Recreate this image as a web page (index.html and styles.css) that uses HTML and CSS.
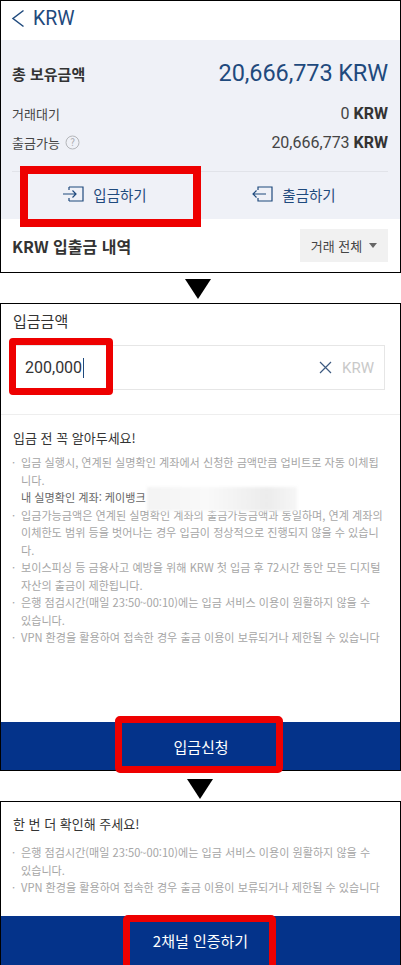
FILE: index.html
```html
<!DOCTYPE html>
<html lang="ko">
<head>
<meta charset="utf-8">
<title>KRW 입금</title>
<link rel="stylesheet" href="styles.css">
</head>
<body>
<div class="page">
  <section class="screen screen-one">
    <header class="nav">
      <svg class="back" width="14" height="20" viewBox="0 0 14 20"><path d="M12.5 1.500 2 9.500l10.500 8" fill="none" stroke="#1f4a7d" stroke-width="1.500"/></svg>
      <span class="nav-title">KRW</span>
    </header>
    <div class="summary">
      <div class="total-row">
        <strong class="total-label">총 보유금액</strong>
        <span class="total-value">20,666,773 KRW</span>
      </div>
      <div class="line-row line-first">
        <span>거래대기</span>
        <span>0 <b>KRW</b></span>
      </div>
      <div class="line-row line-second">
        <span class="with-help">출금가능
          <svg width="15" height="15" viewBox="0 0 15 15"><circle cx="7.500" cy="7.500" r="6.500" fill="none" stroke="#b4b6ba"/><text x="7.500" y="11" class="help-mark">?</text></svg>
        </span>
        <span>20,666,773 <b>KRW</b></span>
      </div>
      <div class="actions">
        <div class="action">
          <svg width="21" height="16" viewBox="0 0 21 16"><path d="M6 1h14v14H6M6 1v3M6 12v3M0 8h13M9.500 4.500 13 8l-3.500 3.500" fill="none" stroke="#1f4a7d" stroke-width="1.200"/></svg>
          <span>입금하기</span>
        </div>
        <div class="action">
          <svg width="21" height="16" viewBox="0 0 21 16"><path d="M6 4V1h14v14H6v-3M1 8h13M4.500 4.500 1 8l3.500 3.500" fill="none" stroke="#1f4a7d" stroke-width="1.200"/></svg>
          <span>출금하기</span>
        </div>
      </div>
    </div>
    <div class="history">
      <strong>KRW 입출금 내역</strong>
      <div class="select">거래 전체<i class="caret"></i></div>
    </div>
    <div class="mark mark-deposit"></div>
  </section>

  <div class="arrow arrow-one"></div>

  <section class="screen screen-two">
    <div class="amount-label">입금금액</div>
    <div class="input">
      <span class="input-value">200,000</span><i class="cursor"></i>
      <svg class="clear" width="13" height="13" viewBox="0 0 13 13"><path d="M1 1l11 11M12 1 1 12" stroke="#3d5a80" stroke-width="1.200"/></svg>
      <span class="unit">KRW</span>
    </div>
    <div class="notice">
      <h2>입금 전 꼭 알아두세요!</h2>
      <ul class="notes">
        <li>입금 실행시, 연계된 실명확인 계좌에서 신청한 금액만큼 업비트로 자동 이체됩<span class="keep">니다.</span><br><span class="account">내 실명확인 계좌: 케이뱅크</span></li>
        <li>입금가능금액은 연계된 실명확인 계좌의 출금가능금액과 동일하며, 연계 계좌의 이체한도 범위 등을 벗어나는 경우 입금이 정상적으로 진행되지 않을 수 있습니다.</li>
        <li>보이스피싱 등 금융사고 예방을 위해 KRW 첫 입금 후 72시간 동안 모든 디지털 자산의 출금이 제한됩니다.</li>
        <li>은행 점검시간(매일 23:50~00:10)에는 입금 서비스 이용이 원활하지 않을 수 <span class="keep">있습니다.</span></li>
        <li>VPN 환경을 활용하여 접속한 경우 출금 이용이 보류되거나 제한될 수 있습니다</li>
      </ul>
    </div>
    <div class="bar bar-two">입금신청</div>
    <div class="mark mark-input"></div>
    <div class="mark mark-submit"></div>
    <div class="blur-patch"></div>
  </section>

  <div class="arrow arrow-two"></div>

  <section class="screen screen-three">
    <h2>한 번 더 확인해 주세요!</h2>
    <ul class="notes">
      <li>은행 점검시간(매일 23:50~00:10)에는 입금 서비스 이용이 원활하지 않을 수 <span class="keep">있습니다.</span></li>
      <li>VPN 환경을 활용하여 접속한 경우 출금 이용이 보류되거나 제한될 수 있습니다</li>
    </ul>
    <div class="bar bar-three">2채널 인증하기</div>
    <div class="mark mark-auth"></div>
  </section>
</div>
</body>
</html>
```
FILE: styles.css
```css
* { box-sizing: border-box; }
html, body { margin: 0; padding: 0; background: #fff; }
body {
  font-family: "Noto Sans CJK KR", "Noto Sans", "Roboto", sans-serif;
  color: #333;
  overflow: hidden;
}
.page { width: 401px; height: 965px; display: flex; flex-direction: column; }
.screen { position: relative; border: 1px solid #000; background: #fff; flex: none; }
.screen-one { height: 273px; display: flex; flex-direction: column; }
.screen-two { height: 468px; display: flex; flex-direction: column; }
.screen-three { height: 164px; display: flex; flex-direction: column; border-bottom: 0; }

.nav { height: 39px; display: flex; align-items: center; gap: 8px; padding: 0 0 4px 10px; }
.back { flex: none; }
.nav-title { font-family: "Roboto", sans-serif; font-size: 19.500px; color: #1f4a7d; }

.summary { height: 179px; background: #eff1f7; padding: 0 12px 0 11px; display: flex; flex-direction: column; }
.total-row { display: flex; justify-content: space-between; align-items: center; height: 64px; padding-top: 2px; }
.total-label { font-size: 15px; font-weight: 700; color: #333; }
.total-value { font-family: "Roboto", sans-serif; font-size: 23.500px; color: #1f4a7d; letter-spacing: -0.100px; }
.line-row { display: flex; justify-content: space-between; align-items: center; color: #444; height: 28px; }
.line-row span:first-child { font-size: 13px; }
.line-row span:last-child { font-family: "Roboto", "Noto Sans CJK KR", sans-serif; font-size: 16px; }
.line-first { margin-top: -5px; }
.line-second { margin-top: 1px; }
.line-row b { font-weight: 700; color: #333; }
.with-help { display: flex; align-items: center; gap: 5px; }
.help-mark { font-size: 10px; fill: #a8aaae; text-anchor: middle; }
.actions { margin-top: 15px; border-top: 1px solid #e1e3e9; display: grid; grid-template-columns: 1fr 1fr; flex: 1; }
.action { display: flex; align-items: center; justify-content: center; gap: 9px; font-size: 14.500px; color: #1f4a7d; padding-bottom: 3px; }
.action:first-child { padding-right: 2px; }
.history { flex: 1; display: flex; align-items: center; justify-content: space-between; padding: 0 12px 0 11px; }
.history strong { font-size: 16px; font-weight: 700; color: #333; }
.select { width: 88px; height: 33px; background: #f1f1f1; display: flex; align-items: center; justify-content: center; gap: 7px; font-size: 13px; color: #444; }
.caret { width: 0; height: 0; border-left: 4.500px solid transparent; border-right: 4.500px solid transparent; border-top: 5px solid #666; }

.arrow { width: 0; height: 0; flex: none; border-left: 13.500px solid transparent; border-right: 13.500px solid transparent; border-top: 20px solid #000; }
.arrow-one { margin: 6px 0 4px 185px; }
.arrow-two { margin: 8px 0 2px 187px; }

.amount-label { font-size: 15px; color: #333; padding: 6px 0 0 12px; height: 41px; }
.input { margin: 0 15px 0 13px; height: 45px; border: 1px solid #e6e6e6; display: flex; align-items: center; padding: 0 10px; flex: none; }
.input-value { font-family: "Roboto", sans-serif; font-size: 16px; color: #333; }
.cursor { width: 1px; height: 20px; background: #1f4a7d; margin-left: 1px; }
.clear { margin-left: auto; }
.unit { font-family: "Roboto", sans-serif; font-size: 15px; color: #c9c9c9; margin-left: 10px; }
.notice { margin: 24px 0 0; border-top: 1px solid #eeeeee; padding: 13px 0 0 0; flex: 1; }
h2 { margin: 0; font-size: 13px; font-weight: 400; color: #333; line-height: 20px; }
.notice h2 { padding-left: 12px; }
.notes { list-style: none; margin: 6px 0 0; padding: 0 12px 0 11px; font-size: 11.100px; line-height: 17.500px; color: #a6a6a6; word-break: break-all; }
.notes li { position: relative; padding-left: 9px; }
.notes li::before { content: "·"; position: absolute; left: 0; top: 0; }
.keep { white-space: nowrap; display: inline-block; }
.account { color: #666; }
.bar { flex: none; background: #04338a; color: #fff; display: flex; align-items: center; justify-content: center; font-size: 15px; }
.bar-two { height: 48px; padding-left: 1px; }
.bar-three { margin-top: auto; height: 49px; }
.screen-three h2 { padding: 12px 0 0 12px; height: 38px; }
.screen-three .notes { margin-top: 4px; }

.mark { position: absolute; border-style: solid; border-color: #ee0000; pointer-events: none; }
.mark-deposit { left: 19px; top: 165px; width: 181px; height: 61px; border-width: 8px; }
.mark-input { left: 8px; top: 34px; width: 104px; height: 57px; border-width: 7px; border-radius: 4px; }
.mark-submit { left: 114px; top: 412px; width: 168px; height: 57px; border-width: 7px; border-radius: 5px; }
.mark-auth { left: 122px; top: 113px; width: 153px; height: 60px; border-width: 7px; border-radius: 5px; }
.blur-patch { position: absolute; left: 146px; top: 183px; width: 150px; height: 24px; background: linear-gradient(90deg, #f3f3f3, #f9f9f9 40%, #ececec 80%, #f6f6f6); filter: blur(1.500px); }
```
